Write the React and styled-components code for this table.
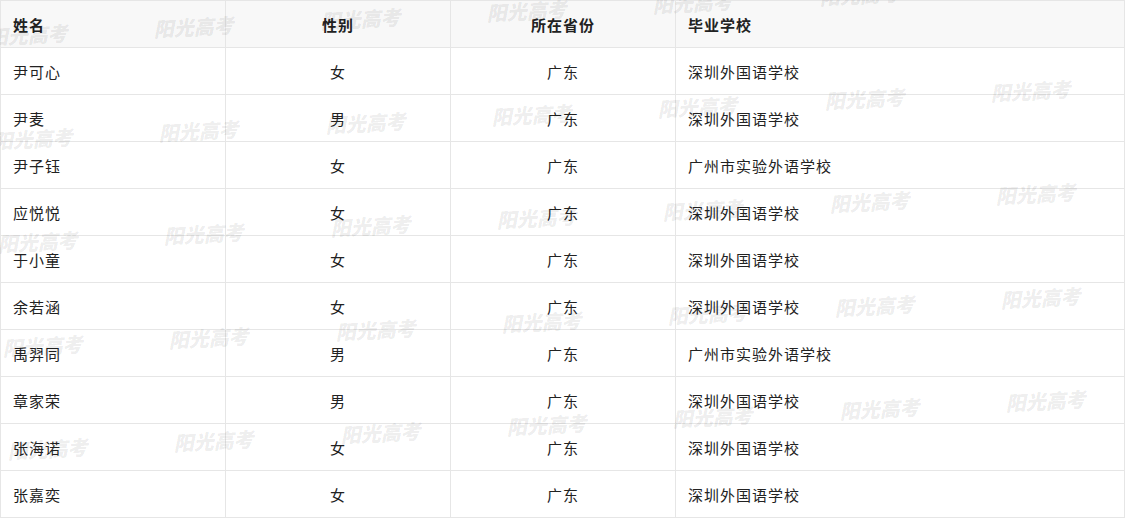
import React from "react";
import styled, { createGlobalStyle } from "styled-components";

const GlobalStyle = createGlobalStyle`
  html, body {
    margin: 0;
    padding: 0;
    background: #fff;
  }
  body {
    font-family: "Noto Sans CJK SC", "Noto Sans", sans-serif;
  }
`;

const students = [
  { name: "尹可心", gender: "女", province: "广东", school: "深圳外国语学校" },
  { name: "尹麦", gender: "男", province: "广东", school: "深圳外国语学校" },
  { name: "尹子钰", gender: "女", province: "广东", school: "广州市实验外语学校" },
  { name: "应悦悦", gender: "女", province: "广东", school: "深圳外国语学校" },
  { name: "于小童", gender: "女", province: "广东", school: "深圳外国语学校" },
  { name: "余若涵", gender: "女", province: "广东", school: "深圳外国语学校" },
  { name: "禹羿同", gender: "男", province: "广东", school: "广州市实验外语学校" },
  { name: "章家荣", gender: "男", province: "广东", school: "深圳外国语学校" },
  { name: "张海诺", gender: "女", province: "广东", school: "深圳外国语学校" },
  { name: "张嘉奕", gender: "女", province: "广东", school: "深圳外国语学校" },
];

// watermark grid, tilted slightly upward to the right
const marks = [];
for (let r = 0; r < 5; r++) {
  for (let c = 0; c < 7; c++) {
    marks.push({
      key: `${r}-${c}`,
      left: -13 + 5 * r + 166.3 * c,
      top: 27 + 103.5 * r - 8 * c,
    });
  }
}

export default function App() {
  return (
    <>
      <GlobalStyle />
      <Wrapper>
        <Table>
          <colgroup>
            <col style={{ width: 225 }} />
            <col style={{ width: 225 }} />
            <col style={{ width: 225 }} />
            <col />
          </colgroup>
          <thead>
            <tr>
              <HeadCell>姓名</HeadCell>
              <HeadCell $align="center">性别</HeadCell>
              <HeadCell $align="center">所在省份</HeadCell>
              <HeadCell>毕业学校</HeadCell>
            </tr>
          </thead>
          <tbody>
            {students.map((s) => (
              <tr key={s.name}>
                <Cell>{s.name}</Cell>
                <Cell $align="center">{s.gender}</Cell>
                <Cell $align="center">{s.province}</Cell>
                <Cell>{s.school}</Cell>
              </tr>
            ))}
          </tbody>
        </Table>
        <Watermarks>
          {marks.map((m) => (
            <Mark key={m.key} style={{ left: m.left, top: m.top }}>
              阳光高考
            </Mark>
          ))}
        </Watermarks>
      </Wrapper>
    </>
  );
}

const Wrapper = styled.div`
  position: relative;
  width: 1125px;
  overflow: hidden;
`;

const Table = styled.table`
  width: 1125px;
  border-collapse: collapse;
  table-layout: fixed;
  border: 1px solid #e6e6e6;
`;

const HeadCell = styled.th`
  height: 47px;
  padding: 0 12px;
  background: #f8f8f8;
  border: 1px solid #e6e6e6;
  text-align: ${(p) => p.$align || "left"};
  font-size: 15px;
  letter-spacing: 1px;
  font-weight: 700;
  color: #222;
  box-sizing: border-box;
`;

const Cell = styled.td`
  height: 47px;
  padding: 0 12px;
  border: 1px solid #e6e6e6;
  text-align: ${(p) => p.$align || "left"};
  font-size: 15px;
  letter-spacing: 1px;
  font-weight: 400;
  color: #222;
  box-sizing: border-box;
`;

const Watermarks = styled.div`
  position: absolute;
  inset: 0;
  pointer-events: none;
`;

const Mark = styled.span`
  position: absolute;
  white-space: nowrap;
  font-size: 20px;
  line-height: 1;
  font-weight: 900;
  font-style: italic;
  color: rgba(0, 0, 0, 0.085);
  transform: rotate(-3deg);
  transform-origin: left top;
`;
